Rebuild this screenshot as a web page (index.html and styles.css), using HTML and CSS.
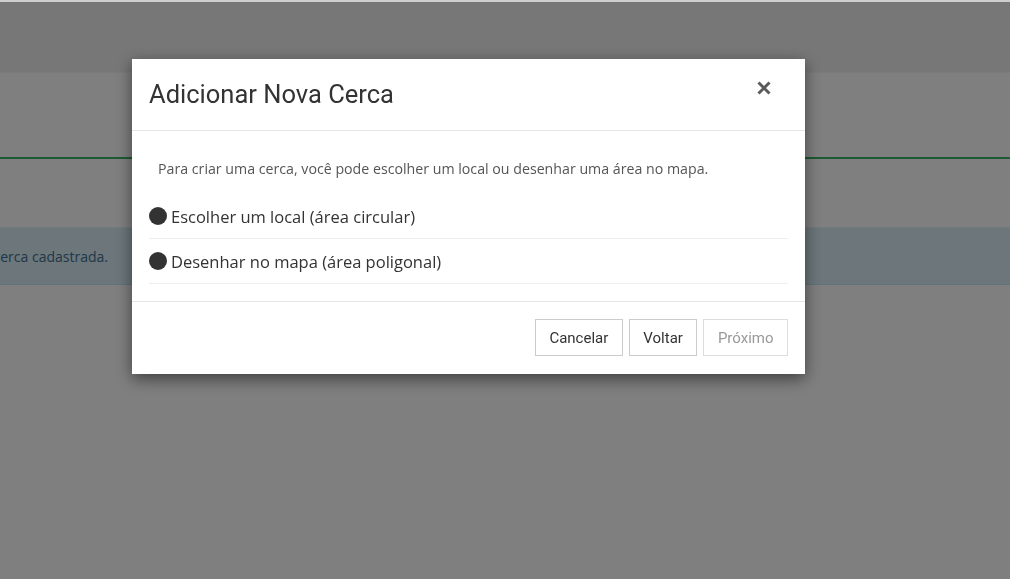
FILE: index.html
```html
<!DOCTYPE html>
<html lang="pt-BR">

<head>
  <meta charset="UTF-8">
  <meta name="viewport" content="width=device-width, initial-scale=1.0">
  <title>Cercas</title>
  <link rel="stylesheet" href="styles.css">
</head>

<body>
  <header class="navbar"></header>
  <div class="tabs"></div>
  <div class="content">
    <div class="alert">Nenhuma cerca cadastrada.</div>
  </div>

  <div class="backdrop">
    <div class="modal">
      <div class="modal-header">
        <h4 class="modal-title">Adicionar Nova Cerca</h4>
        <button class="close" type="button" aria-label="Fechar">
          <svg width="14" height="14" viewBox="0 0 14 14">
            <path d="M1.5 1.5 L12.5 12.5 M12.5 1.5 L1.5 12.5" stroke="#5b5b5b" stroke-width="3" stroke-linecap="butt" />
          </svg>
        </button>
      </div>
      <div class="modal-body">
        <p class="hint">Para criar uma cerca, você pode escolher um local ou desenhar uma área no mapa.</p>
        <ul class="options">
          <li class="option"><span class="dot"></span>Escolher um local (área circular)</li>
          <li class="option"><span class="dot"></span>Desenhar no mapa (área poligonal)</li>
        </ul>
      </div>
      <div class="modal-footer">
        <button class="btn">Cancelar</button>
        <button class="btn">Voltar</button>
        <button class="btn" disabled>Próximo</button>
      </div>
    </div>
  </div>
</body>

</html>
```

FILE: styles.css
```css
html,
body {
  margin: 0;
  height: 100%;
}

body {
  font-family: "Open Sans", Roboto, sans-serif;
  background-color: #fff;
  border-top: 2px solid #cfcfcf;
  box-sizing: border-box;
  overflow: hidden;
}

.navbar {
  height: 70px;
  background-color: #eeeeee;
  border-bottom: 1px solid #f4f4f4;
}

.tabs {
  height: 84px;
  border-bottom: 2px solid #3cb464;
}

.content {
  padding-top: 68px;
}

.alert {
  height: 56px;
  display: flex;
  align-items: center;
  text-indent: -75px;
  font-size: 14px;
  color: #41708f;
  background-color: #d9edf7;
  border-top: 1px solid #e6f4f9;
  border-bottom: 1px solid #bce8f1;
}

.backdrop {
  position: fixed;
  top: 2px;
  left: 0;
  right: 0;
  bottom: 0;
  background-color: rgba(0, 0, 0, .5);
  padding-top: 57px;
}

.modal {
  width: 673px;
  margin-left: 132px;
  background-color: #fff;
  box-shadow: 0 5px 15px rgba(0, 0, 0, .5);
}

.modal-header {
  height: 71px;
  display: flex;
  justify-content: space-between;
  align-items: flex-start;
  padding: 0 34px 0 17px;
  border-bottom: 1px solid #e5e5e5;
}

.modal-title {
  margin: 0;
  padding-top: 20px;
  font-family: Roboto, sans-serif;
  font-size: 25.5px;
  font-weight: 400;
  color: #333;
}

.close {
  margin-top: 22px;
  padding: 0;
  border: none;
  background: transparent;
  cursor: pointer;
}

.modal-body {
  padding: 0 17px 17px;
}

.hint {
  margin: 0;
  padding: 28px 9px 16px;
  font-size: 14.2px;
  line-height: 19px;
  color: #555;
}

.options {
  margin: 0;
  padding: 0;
  list-style: none;
}

.option {
  height: 44px;
  display: flex;
  align-items: center;
  gap: 4px;
  font-size: 16.5px;
  color: #333;
  border-bottom: 1px solid #eee;
}

.dot {
  width: 18px;
  height: 18px;
  border-radius: 50%;
  background-color: #333;
}

.modal-footer {
  display: flex;
  justify-content: flex-end;
  gap: 6px;
  padding: 17px 17px 18px;
  border-top: 1px solid #e5e5e5;
}

.btn {
  height: 37px;
  padding: 0 13.5px;
  font-family: Roboto, sans-serif;
  font-size: 15px;
  color: #333;
  background-color: #fff;
  border: 1px solid #ccc;
  cursor: pointer;
}

.btn:disabled {
  color: #999;
  border-color: #ddd;
  cursor: auto;
}
```
